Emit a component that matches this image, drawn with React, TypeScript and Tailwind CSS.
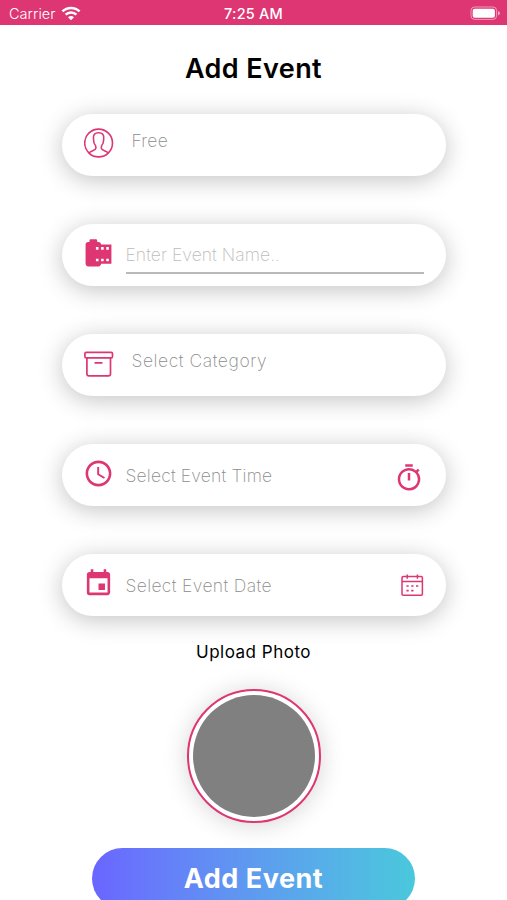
import type { ReactNode } from "react";
import { MdAccessTime, MdCameraRoll, MdEvent, MdOutlineTimer } from "react-icons/md";

function Wifi() {
  return (
    <svg width="20" height="15" viewBox="0 0 20 15" fill="none" stroke="white" strokeWidth="2.5">
      <path d="M1.4 5.4A12.3 12.3 0 0 1 18.6 5.4" />
      <path d="M4.6 8.7A7.7 7.7 0 0 1 15.4 8.7" />
      <path d="M10 14.3L7 11.3Q10 8.8 13 11.3Z" fill="white" stroke="none" />
    </svg>
  );
}

function Battery() {
  return (
    <svg width="31" height="15" viewBox="0 0 31 15" fill="none">
      <rect x="1" y="1" width="25.6" height="12.4" rx="3.6" stroke="white" strokeOpacity=".5" />
      <rect x="2.7" y="2.7" width="22.2" height="9" rx="2" fill="white" />
      <path d="M28 5v4.4q2-.8 2-2.2t-2-2.2Z" fill="white" fillOpacity=".6" />
    </svg>
  );
}

function Contact() {
  return (
    <svg width="30" height="30" viewBox="0 0 30 30" fill="none" stroke="currentColor" strokeWidth="1.6">
      <circle cx="14.6" cy="15" r="13.9" />
      <path d="M4.9 25C6.8 22.8 9.9 22.7 11.3 21.3C12.2 20.3 12 18.8 11.6 17.8C10 16.2 9.5 13.8 9.5 11.3C8.9 6.8 10.8 4.7 14.6 4.7S20.3 6.8 19.7 11.3C19.7 13.8 19.2 16.2 17.6 17.8C17.2 18.8 17 20.3 17.9 21.3C19.3 22.7 22.4 22.8 24.3 25" />
    </svg>
  );
}

function Archive() {
  return (
    <svg width="30" height="26" viewBox="0 0 30 26" fill="none" stroke="currentColor" strokeWidth="1.7" strokeLinecap="round">
      <rect x=".9" y="1.3" width="27.6" height="5.6" rx="1.4" />
      <path d="M2.9 6.9V22.7Q2.9 24.8 5 24.8H24.4Q26.5 24.8 26.5 22.7V6.9M11.2 11.8H17.9" />
    </svg>
  );
}

function Calendar() {
  return (
    <svg width="23" height="23" viewBox="0 0 23 23" fill="none" stroke="currentColor" strokeWidth="1.5">
      <rect x="1" y="2.6" width="20.4" height="18.6" rx="1.2" />
      <path d="M1 7.6H21.4M6.2.4V4.8M16.4.4V4.8" />
      <path d="M5.4 12h2.3m2.5 0h2.3m2.5 0h2.3M5.4 16.6h2.3m2.5 0h2.3" strokeWidth="1.7" />
    </svg>
  );
}

function Field({ children }: { children: ReactNode }) {
  return (
    <div className="flex h-[62px] w-[384px] items-start rounded-full bg-white text-[#dd3672] shadow-[0_4px_25px_rgba(0,0,0,0.24)]">
      {children}
    </div>
  );
}

const label = "whitespace-nowrap font-[Inter,sans-serif] text-[17.5px] leading-6 font-extralight";

export default function App() {
  return (
    <div className="h-[900px] w-[507px] overflow-hidden bg-white font-[Inter,sans-serif]">
      <header className="grid h-[25px] grid-cols-3 items-center bg-[#dd3672] text-white">
        <div className="flex items-center gap-[5px] pt-[2px] pl-[9px]">
          <span className="text-[14.5px] leading-5 font-light tracking-[0.05px]">Carrier</span>
          <Wifi />
        </div>
        <span className="pt-[2px] text-center text-[14.5px] leading-5 font-medium tracking-[0.2px]">7:25 AM</span>
        <div className="flex justify-end pt-[1px] pr-[6px]"><Battery /></div>
      </header>

      <h1 className="mt-[26px] text-center text-[27px] leading-9 font-semibold tracking-[0.4px] text-black">
        Add Event
      </h1>

      <main className="mt-[27px] flex flex-col items-center">
        <div className="flex flex-col gap-12">
          <Field>
            <div className="ml-[22px] pt-[14px]"><Contact /></div>
            <span className={`${label} mt-[15px] ml-[18px] tracking-[0.3px] text-[#8c8c8c]`}>Free</span>
          </Field>
          <Field>
            <MdCameraRoll className="mt-[14px] ml-[21px] size-[31px]" />
            <div className="mt-[19px] ml-3 h-[31px] w-[298px] border-b-2 border-[#b9b9b9]">
              <span className={`${label} tracking-[0.05px] text-[#bcbcbc]`}>Enter Event Name..</span>
            </div>
          </Field>
          <Field>
            <div className="ml-[22px] pt-[17px]"><Archive /></div>
            <span className={`${label} mt-[15px] ml-[18px] tracking-[0.55px] text-[#8c8c8c]`}>Select Category</span>
          </Field>
          <Field>
            <MdAccessTime className="mt-[14px] ml-[21px] size-[31px]" />
            <span className={`${label} mt-5 ml-3 grow tracking-[0.17px] text-[#8c8c8c]`}>Select Event Time</span>
            <MdOutlineTimer className="mt-[19px] mr-[22px] size-[30px]" />
          </Field>
          <Field>
            <MdEvent className="mt-[14px] ml-[21px] size-[31px]" />
            <span className={`${label} mt-5 ml-3 grow tracking-[0.35px] text-[#8c8c8c]`}>Select Event Date</span>
            <div className="mt-5 mr-[22px]"><Calendar /></div>
          </Field>
        </div>

        <p className="mt-[24px] text-[17px] leading-6 tracking-[0.5px] text-black">Upload Photo</p>
        <div className="mt-[25px] size-[134px] rounded-full border-[2.5px] border-[#dd3672] bg-white p-[4px] shadow-[0_2px_24px_rgba(0,0,0,0.17)]">
          <div className="size-full rounded-full bg-[#808080]" />
        </div>
        <button className="mt-[25px] h-[61px] w-[323px] rounded-full bg-linear-to-r from-[#6a65ff] to-[#49c8dc] text-[27px] leading-9 font-bold tracking-[0.5px] text-white">
          Add Event
        </button>
      </main>
    </div>
  );
}
